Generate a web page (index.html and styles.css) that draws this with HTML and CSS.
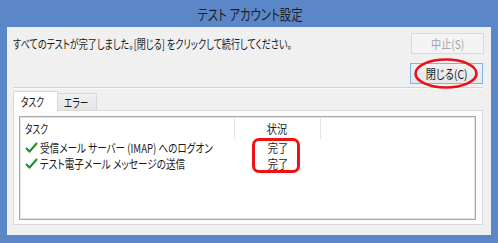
FILE: index.html
```html
<!DOCTYPE html>
<html lang="ja">
<head>
<meta charset="utf-8">
<link rel="stylesheet" href="styles.css">
</head>
<body>
<div class="window">
  <div class="titlebar"><span class="sq mid">テスト アカウント設定</span></div>
  <div class="client">
    <div class="toprow">
      <span class="msg sq">すべてのテストが完了しました。[閉じる] をクリックして続行してください。</span>
      <button class="btn disabled"><span class="sq mid">中止(S)</span></button>
    </div>
    <div class="closerow">
      <button class="btn default"><span class="sq mid">閉じる(C)</span></button>
      <svg class="ellipse" width="64" height="31" viewBox="0 0 64 31"><ellipse cx="32" cy="15.5" rx="30.5" ry="14" fill="none" stroke="#e8101a" stroke-width="2.6"/></svg>
    </div>
    <div class="sep"></div>
    <div class="tabs">
      <div class="tab sel"><span class="sq">タスク</span></div>
      <div class="tab"><span class="sq">エラー</span></div>
    </div>
    <div class="panel">
      <div class="list">
        <div class="lhead">
          <div class="c1"><span class="sq">タスク</span></div>
          <div class="c2"><span class="sq mid">状況</span></div>
          <div class="c3"></div>
        </div>
        <div class="row">
          <div class="c1"><svg class="check" width="13" height="11" viewBox="0 0 13 11"><path d="M1 6 L4.5 9.5 L12 1" fill="none" stroke="#1e8a23" stroke-width="2"/></svg><span class="sq">受信メール サーバー (IMAP) へのログオン</span></div>
          <div class="c2"><span class="sq mid">完了</span></div>
        </div>
        <div class="row">
          <div class="c1"><svg class="check" width="13" height="11" viewBox="0 0 13 11"><path d="M1 6 L4.5 9.5 L12 1" fill="none" stroke="#1e8a23" stroke-width="2"/></svg><span class="sq">テスト電子メール メッセージの送信</span></div>
          <div class="c2"><span class="sq mid">完了</span></div>
        </div>
        <div class="redbox"></div>
      </div>
    </div>
  </div>
</div>
</body>
</html>
```
FILE: styles.css
```css
html, body {
  margin: 0;
  padding: 0;
}
body {
  width: 498px;
  height: 243px;
  background: #5b87c9;
  font-family: "Noto Sans CJK JP", "Noto Sans", sans-serif;
  font-feature-settings: "palt";
  font-size: 12px;
  color: #1a1a1a;
  overflow: hidden;
  white-space: nowrap;
}
.sq {
  display: inline-block;
  transform: scaleX(0.8);
  transform-origin: left center;
}
.sq.mid {
  transform-origin: center center;
}
.window {
  width: 498px;
  height: 243px;
  box-sizing: border-box;
  padding: 0 7px 8px 7px;
  display: flex;
  flex-direction: column;
}
.titlebar {
  height: 27px;
  display: flex;
  align-items: center;
  justify-content: center;
  font-size: 15px;
  color: #1f1f1f;
  padding-left: 2px;
}
.titlebar .sq {
  transform: scaleX(0.76);
}
.client {
  flex: 1;
  background: #f0f0f0;
  padding: 6px 7px 0 6px;
  box-sizing: border-box;
  display: flex;
  flex-direction: column;
}
.toprow {
  display: flex;
  justify-content: space-between;
  align-items: center;
  height: 21px;
}
.msg {
  font-size: 12px;
  transform: scaleX(0.755);
}
.btn {
  width: 73px;
  height: 21px;
  box-sizing: border-box;
  font-family: inherit;
  font-feature-settings: "palt";
  font-size: 12px;
  padding: 0;
  line-height: 1;
  display: flex;
  align-items: center;
  justify-content: center;
  flex: none;
}
.btn .sq {
  transform: scaleX(0.85);
}
.btn.disabled {
  background: #f4f4f4;
  border: 1px solid #dadada;
  color: #a3a3a3;
}
.btn.default {
  background: linear-gradient(#f2f2f2, #e6e6e6);
  border: 1px solid #7eb4ea;
  color: #1a1a1a;
  margin-right: 1px;
}
.closerow {
  display: flex;
  justify-content: flex-end;
  margin-top: 9px;
  position: relative;
}
.ellipse {
  position: absolute;
  right: 6px;
  top: -5px;
}
.sep {
  margin-top: 3px;
  height: 1px;
  border-top: 1px solid #d5d5d5;
  background: #fafafa;
  margin-right: 1px;
}
.tabs {
  display: flex;
  align-items: flex-end;
  height: 21px;
  position: relative;
  z-index: 1;
}
.tab {
  flex: none;
  height: 17px;
  box-sizing: border-box;
  border: 1px solid #d9d9d9;
  border-bottom: none;
  background: linear-gradient(#f0f0f0, #e5e5e5);
  padding: 0 0 0 6px;
  display: flex;
  align-items: center;
  width: 40px;
  min-width: 0;
  overflow: hidden;
  margin-left: -1px;
}
.tab.sel {
  height: 20px;
  margin-left: 0;
  margin-bottom: -1px;
  background: #fff;
  width: 45px;
  align-items: flex-start;
  padding-top: 1px;
  padding-left: 7px;
  position: relative;
  z-index: 1;
}
.tab .sq {
  transform: scaleX(0.72);
}
.panel {
  height: 115px;
  box-sizing: border-box;
  border: 1px solid #d9d9d9;
  background: #fcfcfc;
  padding: 5px 6px 4px 5px;
  margin-right: 1px;
}
.list {
  height: 100%;
  box-sizing: border-box;
  border: 1px solid #a9a9a9;
  box-shadow: inset 1px 1px 0 #e3e3e3, inset -1px -1px 0 #e3e3e3;
  background: #fff;
  position: relative;
}
.lhead {
  display: flex;
  height: 22px;
  align-items: stretch;
}
.lhead > div {
  border-right: 1px solid #e5e5e5;
  display: flex;
  align-items: center;
}
.lhead .c3 {
  border-right: none;
  flex: 1;
}
.lhead .c1 .sq {
  transform: scaleX(0.72);
}
.c1 {
  width: 215px;
  flex: none;
  box-sizing: border-box;
  padding-left: 5px;
  display: flex;
  align-items: center;
}
.c2 {
  width: 86px;
  flex: none;
  box-sizing: border-box;
  display: flex;
  justify-content: center;
  align-items: center;
}
.c2 .sq {
  transform: scaleX(0.85);
}
.row {
  display: flex;
  height: 16px;
}
.row .c1 {
  padding-left: 5px;
}
.check {
  margin-right: 2px;
  flex: none;
}
.redbox {
  position: absolute;
  left: 232px;
  top: 21px;
  width: 48px;
  height: 35px;
  box-sizing: border-box;
  border: 3px solid #ee1111;
  border-radius: 7px;
}
```
